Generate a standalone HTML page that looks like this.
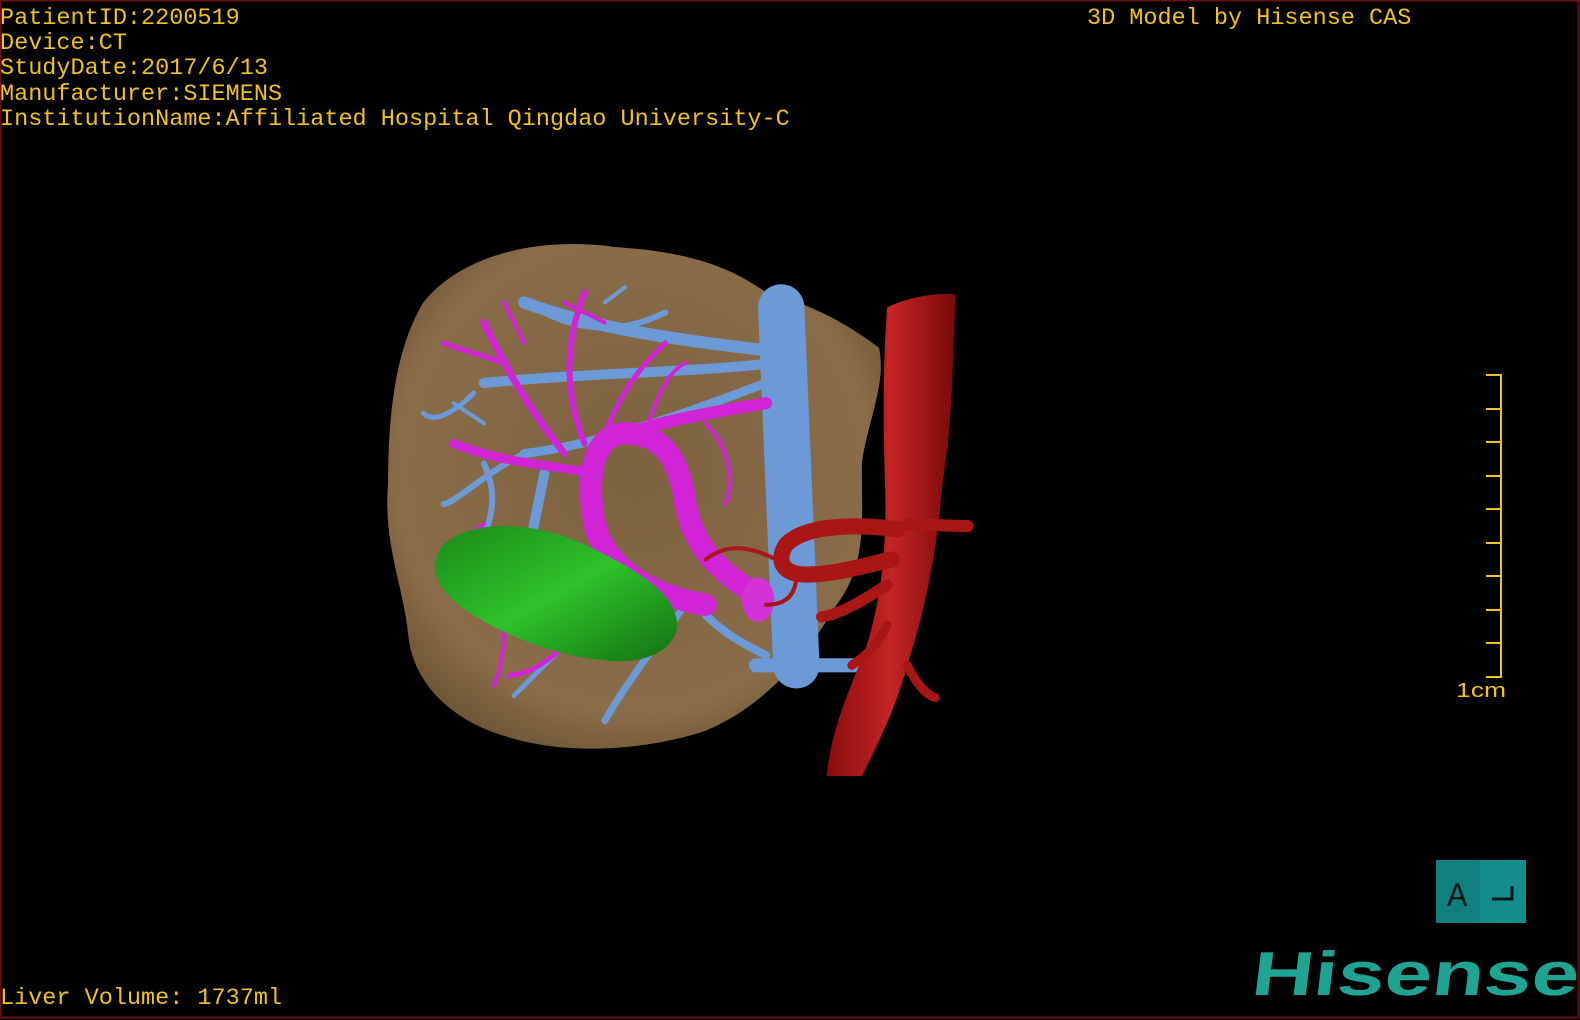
<!DOCTYPE html>
<html><head><meta charset="utf-8"><style>
html,body{margin:0;padding:0;background:#000;}
body{width:1580px;height:1020px;overflow:hidden;position:relative;font-family:"Liberation Mono",monospace;}
.t{position:absolute;color:#f2c21c;font-size:23.5px;line-height:25.2px;white-space:pre;}
</style></head><body>
<svg width="1580" height="1020" style="position:absolute;left:0;top:0">
<defs>
<radialGradient id="liv" cx="50%" cy="45%" r="60%"><stop offset="0" stop-color="#7c6240"/><stop offset="0.8" stop-color="#8a6c48"/><stop offset="1" stop-color="#6e5535"/></radialGradient>
<linearGradient id="gb" x1="0" y1="0" x2="1" y2="1"><stop offset="0" stop-color="#1a8a18"/><stop offset="0.5" stop-color="#2fc22a"/><stop offset="1" stop-color="#127012"/></linearGradient>
<linearGradient id="ao" x1="0" y1="0" x2="1" y2="0"><stop offset="0" stop-color="#8a0c0c"/><stop offset="0.5" stop-color="#c42424"/><stop offset="1" stop-color="#7a0a0a"/></linearGradient>
</defs>
<rect x="0.5" y="0.5" width="1578" height="1017" fill="#000" stroke="#6a1014" stroke-width="2"/>
<g transform="scale(1.008)">
<path d="M420 300 C460 250 540 235 610 245 C680 250 720 262 760 290 C800 300 840 320 872 345 C880 380 860 420 855 460 C855 520 860 560 830 600 C800 650 760 700 700 725 C640 745 560 750 500 730 C450 715 410 680 405 630 C400 580 380 540 385 480 C385 420 390 350 420 300 Z" fill="url(#liv)"/>
<g stroke="#6c9ad6" stroke-linecap="round" fill="none">
<path d="M775 305 L790 660" stroke-width="46"/>
<path d="M750 660 L865 660" stroke-width="14"/>
<path d="M780 350 C700 340 600 330 520 300" stroke-width="12"/>
<path d="M770 360 C680 370 580 370 480 380" stroke-width="10"/>
<path d="M760 380 C680 410 600 440 520 450" stroke-width="9"/>
<path d="M540 310 C580 330 620 330 660 310" stroke-width="6"/>
<path d="M470 390 C450 410 430 420 420 410" stroke-width="5"/>
<path d="M520 450 C480 470 450 500 440 500" stroke-width="6"/>
<path d="M540 470 C530 520 520 560 520 600" stroke-width="10"/>
<path d="M480 460 C500 500 480 540 460 560" stroke-width="6"/>
<path d="M680 600 C650 640 620 680 600 715" stroke-width="7"/>
<path d="M560 640 C540 660 520 680 510 690" stroke-width="5"/>
<path d="M700 610 C720 630 740 640 760 650" stroke-width="8"/>
<path d="M600 300 L620 285 M560 310 L590 320 M450 400 L480 420" stroke-width="4"/>
</g>
<g stroke="#d024d6" stroke-linecap="round" fill="none">
<path d="M750 590 C720 570 690 550 680 500 C675 460 660 430 620 430 C590 430 580 470 590 520 C600 560 640 590 700 600" stroke-width="22"/>
<path d="M600 440 C640 420 700 410 760 400" stroke-width="12"/>
<path d="M590 470 C540 460 500 460 450 440" stroke-width="9"/>
<path d="M560 450 C520 400 500 360 480 320" stroke-width="7"/>
<path d="M580 440 C560 390 560 340 580 290" stroke-width="6"/>
<path d="M500 360 C470 350 450 345 440 340" stroke-width="5"/>
<path d="M600 430 C620 380 640 360 660 340" stroke-width="5"/>
<path d="M640 430 C650 400 660 370 680 360" stroke-width="4"/>
<path d="M700 420 C720 440 730 470 720 500" stroke-width="4"/>
<path d="M500 300 L520 340 M560 300 L600 320 M480 520 L440 550 M500 620 C500 650 495 670 490 680" stroke-width="4"/>
<path d="M560 640 C540 660 520 670 505 670" stroke-width="5"/>
<ellipse cx="752" cy="595" rx="16" ry="22" fill="#d432d8" stroke="none"/>
</g>
<path d="M440 540 C470 515 530 515 590 545 C640 570 670 590 672 620 C670 645 640 660 600 655 C540 650 480 620 455 600 C430 580 425 560 440 540 Z" fill="url(#gb)"/>
<path d="M880 305 C900 295 930 290 948 292 C945 360 945 420 935 480 C930 540 920 600 900 660 C890 700 870 740 855 770 L820 770 C825 720 845 680 860 640 C875 590 880 540 878 480 C876 420 876 360 880 305 Z" fill="url(#ao)"/>
<g stroke="#a81616" stroke-linecap="round" fill="none">
<path d="M890 525 C850 520 800 520 780 540 C770 555 775 570 800 570 C830 570 860 560 885 555" stroke-width="16"/>
<path d="M900 520 L960 522" stroke-width="12"/>
<path d="M880 580 C850 600 830 610 815 612" stroke-width="11"/>
<path d="M880 620 C870 640 860 650 845 660" stroke-width="9"/>
<path d="M900 660 C910 680 920 690 928 692" stroke-width="9"/>
<path d="M790 570 C790 590 780 600 760 600 M770 555 C740 540 720 540 700 555" stroke-width="4"/>
</g>
</g>
<g stroke="#f2c21c" stroke-width="2" fill="none">
<path d="M1486 375 H1501 V677 H1486"/>
<path d="M1486 409 H1501 M1486 442 H1501 M1486 476 H1501 M1486 509 H1501 M1486 543 H1501 M1486 576 H1501 M1486 610 H1501 M1486 643 H1501"/>
</g>
<text x="1456" y="697" fill="#f2c21c" font-family="Liberation Sans,sans-serif" font-size="20" textLength="50" lengthAdjust="spacingAndGlyphs">1cm</text>
<rect x="1436" y="860" width="44" height="63" fill="#10807e"/>
<rect x="1480" y="860" width="46" height="63" fill="#148e8c"/>
<text x="1447" y="906" font-family="Liberation Mono,monospace" font-size="34" fill="#081818">A</text>
<path d="M1492 899 H1512 V886" stroke="#081818" stroke-width="3" fill="none"/>
<text x="0" y="0" transform="translate(1250 995) skewX(-7)" font-family="Liberation Sans,sans-serif" font-weight="bold" font-size="62" fill="#1fa393" textLength="327" lengthAdjust="spacingAndGlyphs">Hisense</text>
</svg>
<div class="t" style="left:0;top:6px">PatientID:2200519
Device:CT
StudyDate:2017/6/13
Manufacturer:SIEMENS
InstitutionName:Affiliated Hospital Qingdao University-C</div>
<div class="t" style="left:1087px;top:6px">3D Model by Hisense CAS</div>
<div class="t" style="left:0;top:986px">Liver Volume: 1737ml</div>
</body></html>
